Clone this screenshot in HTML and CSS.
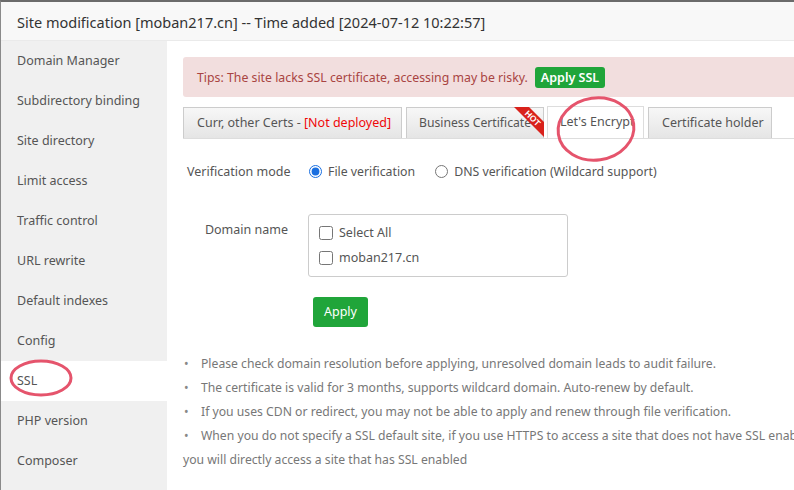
FILE: index.html
```html
<!DOCTYPE html>
<html>
<head>
<meta charset="utf-8">
<link rel="stylesheet" href="styles.css">
</head>
<body>
<div class="dialog">
  <div class="title">Site modification [moban217.cn] -- Time added [2024-07-12 10:22:57]</div>
  <div class="body">
    <ul class="side">
      <li>Domain Manager</li>
      <li>Subdirectory binding</li>
      <li>Site directory</li>
      <li>Limit access</li>
      <li>Traffic control</li>
      <li>URL rewrite</li>
      <li>Default indexes</li>
      <li>Config</li>
      <li class="active">SSL</li>
      <li>PHP version</li>
      <li>Composer</li>
    </ul>
    <div class="main">
      <div class="alert">Tips: The site lacks SSL certificate, accessing may be risky. <span class="btn-sm">Apply SSL</span></div>
      <div class="tabs">
        <div class="tab t1">Curr, other Certs - <span class="red">[Not deployed]</span></div>
        <div class="tab t2">Business Certificate<span class="hot"><svg width="30" height="30" viewBox="0 0 30 30"><polygon points="0,0 15,0 30,15 30,30" fill="#d9221c"/><text x="18.8" y="11.2" transform="rotate(45 18.8 11.2)" text-anchor="middle" dominant-baseline="central" font-size="8.5" font-weight="bold" fill="#fff" font-family="Liberation Sans, sans-serif">HOT</text></svg></span></div>
        <div class="tab t3 active">Let's Encrypt</div>
        <div class="tab t4">Certificate holder</div>
      </div>
      <div class="row verify">
        <label class="lbl">Verification mode</label>
        <label class="opt"><input type="radio" name="m" checked> File verification</label>
        <label class="opt"><input type="radio" name="m"> DNS verification (Wildcard support)</label>
      </div>
      <div class="row domain">
        <label class="lbl right">Domain name</label>
        <div class="box">
          <label class="chk"><input type="checkbox"> Select All</label>
          <label class="chk"><input type="checkbox"> moban217.cn</label>
        </div>
      </div>
      <div class="apply-row"><span class="btn">Apply</span></div>
      <ul class="notes">
        <li>Please check domain resolution before applying, unresolved domain leads to audit failure.</li>
        <li>The certificate is valid for 3 months, supports wildcard domain. Auto-renew by default.</li>
        <li>If you uses CDN or redirect, you may not be able to apply and renew through file verification.</li>
        <li>When you do not specify a SSL default site, if you use HTTPS to access a site that does not have SSL enabled, you will directly access a site that has SSL enabled</li>
      </ul>
    </div>
  </div>
  <svg class="mark" width="794" height="490" viewBox="0 0 794 490">
    <ellipse cx="596" cy="129" rx="38" ry="31" transform="rotate(-8 596 129)" fill="none" stroke="#e5546c" stroke-width="3"/>
    <ellipse cx="41" cy="378" rx="30" ry="17" fill="none" stroke="#e5546c" stroke-width="3"/>
  </svg>
</div>
</body>
</html>
```
FILE: styles.css
```css
* { box-sizing: border-box; }
html, body { margin: 0; padding: 0; }
body {
  width: 794px; height: 490px; overflow: hidden;
  font-family: "Noto Sans", "Open Sans", sans-serif;
  background: #fff;
}
.dialog {
  position: relative;
  width: 900px; height: 490px;
  border-top: 2px solid #6b6b6b;
  border-left: 1px solid #8a8a8a;
}
.title {
  height: 39px;
  background: #f8f8f8;
  border-bottom: 1px solid #eaeaea;
  padding-left: 16px;
  font-size: 14.5px;
  line-height: 40px;
  color: #333;
}
.body { display: flex; height: 449px; }
.side {
  list-style: none; margin: 0; padding: 0;
  width: 166px; flex: none;
  background: #f0f0f0;
}
.side li {
  height: 40px; line-height: 39px;
  padding-left: 16px;
  font-size: 12.5px; color: #555;
}
.side li.active { background: #fff; }
.main { flex: 1; padding: 16px 16px 0 16px; }
.alert {
  height: 40px;
  background: #f2dede;
  color: #a94442;
  border-radius: 3px;
  font-size: 12.3px;
  padding-left: 14px;
  display: flex; align-items: center;
  width: 700px;
}
.btn-sm {
  display: inline-block;
  margin-left: 7px;
  background: #20a53a; color: #fff;
  border-radius: 3px;
  font-size: 12.5px; font-weight: 600;
  height: 21px; line-height: 21px;
  padding: 0 6px;
}
.tabs {
  display: flex; align-items: flex-end;
  margin-top: 10px;
  border-bottom: 1px solid #ddd;
  height: 32px;
}
.tab {
  position: relative;
  height: 31px; line-height: 29px;
  border: 1px solid #ccc;
  border-bottom: none;
  background: linear-gradient(#f7f7f7, #e5e5e5);
  font-size: 12.5px; color: #555;
  padding: 0 13px;
  margin-right: 4px;
  white-space: nowrap;
}
.tab.active { background: #fff; height: 32px; border-color: #ddd; }
.t1 { width: 219px; }
.t2 { width: 138px; margin-right: 3px; padding: 0 0 0 12px; font-size: 12.2px; }
.t3 { width: 97px; padding: 0 0 0 12px; overflow: hidden; }
.t4 { width: 124px; }
.red { color: #ef0808; }
.hot { position: absolute; right: -1px; top: -1px; line-height: 0; }
.row { display: flex; }
.verify { margin-top: 16px; align-items: center; height: 32px; }
.lbl { font-size: 12.5px; color: #555; width: 125px; padding-left: 4px; flex: none; }
.lbl.right { text-align: right; padding: 0 20px 0 0; line-height: 32px; }
.opt { font-size: 12.3px; color: #555; display: flex; align-items: center; margin-right: 19px; }
.opt input { margin: 0 6px 0 1px; width: 13px; height: 13px; accent-color: #1a6fe0; }
.domain { margin-top: 27px; }
.box {
  width: 260px; height: 63px;
  border: 1px solid #ccc; border-radius: 3px;
  padding: 5px 10px;
}
.chk { display: flex; align-items: center; font-size: 12.5px; color: #555; height: 25px; }
.chk input { margin: 0 6px 0 0; width: 14px; height: 14px; }
.apply-row { margin: 20px 0 0 130px; }
.btn {
  display: inline-block;
  background: #20a53a; color: #fff;
  border-radius: 3px;
  font-size: 12.5px;
  height: 30px; line-height: 30px;
  padding: 0 11px;
}
.notes {
  list-style: none;
  margin: 25px 0 0 0; padding: 0;
  width: 645px;
  font-size: 12.2px; line-height: 24px; color: #777;
}
.notes li::before {
  content: "\2022";
  display: inline-block;
  width: 17px; padding-left: 1px;
  color: #888;
}
.mark { position: absolute; left: -1px; top: -2px; pointer-events: none; }
```
